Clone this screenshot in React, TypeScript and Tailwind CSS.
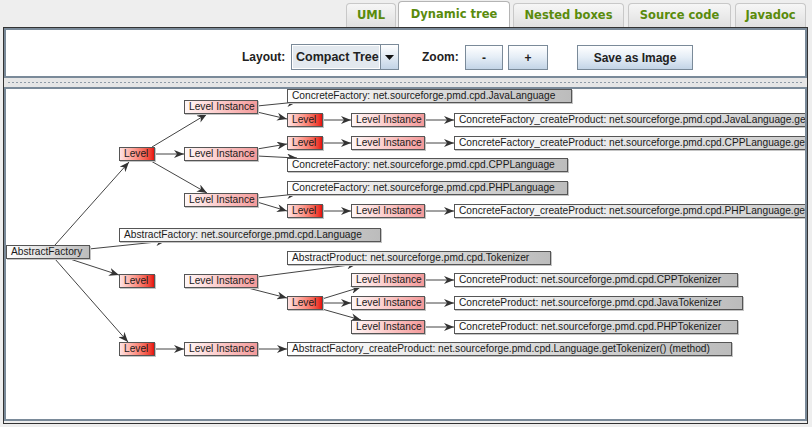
type Kind = "gray" | "level" | "inst";

const boxKind: Record<Kind, string> = {
  gray: "bg-linear-to-r from-white to-[#bcbcbc]",
  level: "bg-linear-to-r from-[#ffe2e2] to-[#e80808]",
  inst: "bg-linear-to-r from-[#fff7f7] to-[#f39a9a]",
};

// page coordinates: x, y, width, kind, label
const nodes: [number, number, number, Kind, string][] = [
  [6, 245, 84, "gray", "AbstractFactory"],
  [119, 147, 36, "level", "Level"],
  [184, 100, 74, "inst", "Level Instance"],
  [184, 147, 74, "inst", "Level Instance"],
  [184, 193, 74, "inst", "Level Instance"],
  [119, 228, 262, "gray", "AbstractFactory: net.sourceforge.pmd.cpd.Language"],
  [119, 274, 36, "level", "Level"],
  [184, 274, 74, "inst", "Level Instance"],
  [119, 342, 36, "level", "Level"],
  [184, 342, 74, "inst", "Level Instance"],
  [287, 89, 285, "gray", "ConcreteFactory: net.sourceforge.pmd.cpd.JavaLanguage"],
  [287, 113, 36, "level", "Level"],
  [351, 113, 74, "inst", "Level Instance"],
  [454, 113, 470, "gray", "ConcreteFactory_createProduct: net.sourceforge.pmd.cpd.JavaLanguage.getTokenizer() (method)"],
  [287, 136, 36, "level", "Level"],
  [351, 136, 74, "inst", "Level Instance"],
  [454, 136, 470, "gray", "ConcreteFactory_createProduct: net.sourceforge.pmd.cpd.CPPLanguage.getTokenizer() (method)"],
  [287, 158, 281, "gray", "ConcreteFactory: net.sourceforge.pmd.cpd.CPPLanguage"],
  [287, 181, 281, "gray", "ConcreteFactory: net.sourceforge.pmd.cpd.PHPLanguage"],
  [287, 204, 36, "level", "Level"],
  [351, 204, 74, "inst", "Level Instance"],
  [454, 204, 470, "gray", "ConcreteFactory_createProduct: net.sourceforge.pmd.cpd.PHPLanguage.getTokenizer() (method)"],
  [287, 251, 264, "gray", "AbstractProduct: net.sourceforge.pmd.cpd.Tokenizer"],
  [351, 273, 74, "inst", "Level Instance"],
  [454, 273, 284, "gray", "ConcreteProduct: net.sourceforge.pmd.cpd.CPPTokenizer"],
  [287, 296, 36, "level", "Level"],
  [351, 296, 74, "inst", "Level Instance"],
  [454, 296, 289, "gray", "ConcreteProduct: net.sourceforge.pmd.cpd.JavaTokenizer"],
  [351, 320, 74, "inst", "Level Instance"],
  [454, 320, 284, "gray", "ConcreteProduct: net.sourceforge.pmd.cpd.PHPTokenizer"],
  [287, 342, 445, "gray", "AbstractFactory_createProduct: net.sourceforge.pmd.cpd.Language.getTokenizer() (method)"],
];

const edges: [number, number, number, number][] = [
  [55, 245, 129, 162],
  [89, 249, 166, 241],
  [70, 259, 119, 275],
  [55, 259, 128, 342],
  [152, 147, 207, 114],
  [155, 154, 184, 154],
  [151, 161, 207, 193],
  [257, 106, 297, 102],
  [257, 112, 287, 119],
  [257, 149, 287, 144],
  [257, 156, 297, 158],
  [257, 198, 297, 194],
  [257, 202, 287, 211],
  [323, 120, 351, 120],
  [323, 143, 351, 143],
  [323, 211, 351, 211],
  [425, 120, 454, 120],
  [425, 143, 454, 143],
  [425, 211, 454, 211],
  [257, 277, 357, 264],
  [248, 288, 287, 298],
  [322, 299, 361, 287],
  [323, 303, 351, 303],
  [322, 309, 361, 320],
  [425, 280, 454, 280],
  [425, 303, 454, 303],
  [425, 327, 454, 327],
  [155, 349, 184, 349],
  [258, 349, 287, 349],
];

const tabs = [
  { label: "UML", w: "w-[50px]", ml: "ml-0", on: false },
  { label: "Dynamic tree", w: "w-[112px]", ml: "ml-[2px]", on: true },
  { label: "Nested boxes", w: "w-[111px]", ml: "ml-[3px]", on: false },
  { label: "Source code", w: "w-[103px]", ml: "ml-[4px]", on: false },
  { label: "Javadoc", w: "w-[71px]", ml: "ml-[4px]", on: false },
];

function Tab({ label, w, ml, on }: { label: string; w: string; ml: string; on: boolean }) {
  return (
    <div
      className={
        on
          ? `${w} ${ml} h-[26px] flex items-center justify-center rounded-t-[4px] border border-b-0 border-[#b4b4b4] bg-white`
          : `${w} ${ml} h-[24px] flex items-center justify-center rounded-t-[4px] border border-b-0 border-[#c8c8c8] bg-linear-to-b from-[#f6f6f6] to-[#e0e0e0]`
      }
    >
      <span className="font-['DejaVu_Sans',sans-serif] font-bold text-[11.5px] text-[#5a8b0c]">{label}</span>
    </div>
  );
}

function Button({ children, w }: { children: string; w: string }) {
  return (
    <div
      className={`${w} h-[25px] flex items-center justify-center border border-[#7a8a99] bg-linear-to-b from-white via-[#e4edf6] to-[#c3d4e6] text-[12px] font-bold text-[#222]`}
    >
      {children}
    </div>
  );
}

export default function App() {
  return (
    <div className="w-[812px] h-[427px] bg-[#eeeeee] flex flex-col font-['Liberation_Sans',Arial,sans-serif] overflow-hidden">
      <div className="h-[27px] flex items-end justify-end pr-[6px]">
        {tabs.map((t) => (
          <Tab key={t.label} {...t} />
        ))}
      </div>

      <div className="ml-[3px] w-[805px] h-[397px] border border-[#333] flex flex-col">
        <div className="h-[50px] border-2 border-[#7a8a99] bg-white flex items-start pt-[14px] pl-[236px] text-[12px] font-bold text-[#222]">
          <span className="w-[41px] h-[26px] leading-[27px]">Layout:</span>
          <div className="ml-[8px] w-[108px] h-[26px] flex border border-[#7a8a99]">
            <div className="flex-1 flex items-center pl-[3px] bg-[#e3e9ef] border border-white text-[12.5px] whitespace-nowrap overflow-hidden">
              Compact Tree
            </div>
            <div className="w-[18px] flex items-center justify-center border-l border-[#7a8a99] bg-linear-to-b from-white to-[#c3d4e6]">
              <svg width="9" height="5" viewBox="0 0 9 5">
                <path d="M0 0 H9 L4.5 5 Z" fill="#111" />
              </svg>
            </div>
          </div>
          <span className="ml-[23px] w-[35px] h-[26px] leading-[27px]">Zoom:</span>
          <div className="ml-[8px] mt-[1px]">
            <Button w="w-[38px]">-</Button>
          </div>
          <div className="ml-[5px] mt-[1px]">
            <Button w="w-[40px]">+</Button>
          </div>
          <div className="ml-[29px] mt-[1px]">
            <Button w="w-[116px]">Save as Image</Button>
          </div>
        </div>

        <div className="h-[9px] flex items-center bg-[#e6e6e6] px-[3px]">
          <div className="h-[3px] w-full bg-[radial-gradient(circle,#8e9aa6_0.9px,transparent_1.1px)] bg-[length:4px_3px]" />
        </div>

        <div className="h-[334px] border-2 border-[#7a8a99] bg-white relative overflow-hidden">
          <div className="absolute left-[-6px] top-[-89px] w-[812px] h-[427px] text-[10.2px] leading-[12px] text-[#1a1a1a]">
            <svg className="absolute left-0 top-0" width="812" height="427" viewBox="0 0 812 427">
              <defs>
                <marker id="ah" markerWidth="10" markerHeight="8" refX="10" refY="4" orient="auto" markerUnits="userSpaceOnUse">
                  <path d="M0,0 L10,4 L0,8 L3,4 Z" fill="#333" />
                </marker>
              </defs>
              {edges.map(([x1, y1, x2, y2], i) => (
                <line key={i} x1={x1} y1={y1} x2={x2} y2={y2} stroke="#444" strokeWidth="1" markerEnd="url(#ah)" />
              ))}
            </svg>
            {nodes.map(([x, y, w, k, label], i) => (
              <div
                key={i}
                className={`absolute h-[14px] border border-[#555] pl-[4px] whitespace-nowrap overflow-hidden shadow-[1px_1px_0_#c4c4c4] ${boxKind[k]}`}
                style={{ left: x, top: y, width: w }}
              >
                {label}
              </div>
            ))}
          </div>
        </div>
      </div>
    </div>
  );
}
